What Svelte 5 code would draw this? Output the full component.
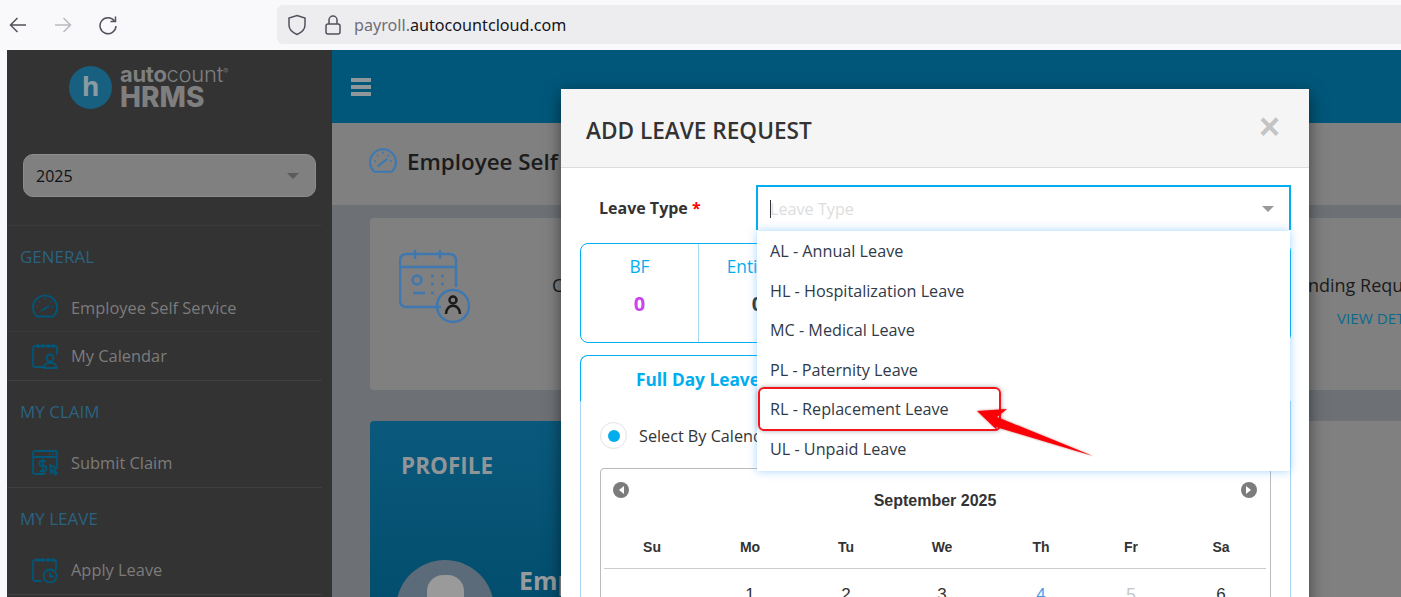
<script>
  const sections = [
    { title: "General", items: [{ label: "Employee Self Service", icon: "gauge" }, { label: "My Calendar", icon: "person" }] },
    { title: "My Claim", items: [{ label: "Submit Claim", icon: "claim" }] },
    { title: "My Leave", items: [{ label: "Apply Leave", icon: "clock" }] }
  ];
  const leaveTypes = ["AL - Annual Leave", "HL - Hospitalization Leave", "MC - Medical Leave", "PL - Paternity Leave", "RL - Replacement Leave", "UL - Unpaid Leave"];
  const weekdays = ["Su", "Mo", "Tu", "We", "Th", "Fr", "Sa"];
  const days = [
    { n: "" }, { n: "1" }, { n: "2" }, { n: "3" }, { n: "4", cls: "today" }, { n: "5", cls: "off" }, { n: "6" }
  ];
  const stats = [{ label: "BF", value: "0" }, { label: "Entitled", value: "0" }];
</script>

<div class="browser">
  <div class="nav-icons">
    <svg width="20" height="20" viewBox="0 0 20 20" fill="none" stroke="#52525e" stroke-width="1.5"><path d="M18 10H2.500M9.500 3l-7 7 7 7" /></svg>
    <svg class="fwd" width="20" height="20" viewBox="0 0 20 20" fill="none" stroke="#b9b9c0" stroke-width="1.5"><path d="M2 10h15.500M10.500 3l7 7-7 7" /></svg>
    <svg width="20" height="20" viewBox="0 0 20 20" fill="none" stroke="#52525e" stroke-width="1.5"><path d="M16.500 6A8 8 0 1 0 18 11" /><path d="M17.500 1.500V6.500H12.500" /></svg>
  </div>
  <div class="urlbar">
    <svg width="20" height="22" viewBox="0 0 20 22" fill="none" stroke="#52525e" stroke-width="1.5"><path d="M10 1.500l8 2.500v7c0 4.500-3.500 7.500-8 9.500-4.500-2-8-5-8-9.500V4z" /></svg>
    <svg class="lock" width="16" height="20" viewBox="0 0 16 20" fill="none" stroke="#52525e" stroke-width="1.5"><rect x="1" y="9" width="14" height="10" rx="2" /><path d="M4 9V5a4 4 0 0 1 8 0v4" /></svg>
    <span class="url"><span class="sub">payroll.</span>autocountcloud.com</span>
  </div>
</div>

<div class="shell">
  <aside class="sidebar">
    <div class="logo">
      <div class="logo-mark">h</div>
      <div class="logo-text">
        <div class="auto"><b>auto</b>count<sup>®</sup></div>
        <div class="hrms">HRMS</div>
      </div>
    </div>
    <div class="year">
      <span>2025</span>
      <i class="tri"></i>
    </div>
    {#each sections as s}
      <section class="side-section">
        <h4>{s.title}</h4>
        {#each s.items as item, i}
          <div class="side-item" class:ruled={i < s.items.length - 1}>
            <svg width="26" height="26" viewBox="0 0 26 26" fill="none" stroke="#00577a" stroke-width="1.8">
              {#if item.icon == "gauge"}
                <path d="M5 22.500A12 12 0 1 1 21 22.500z" />
                <path d="M9 17l8-5M13 4.500v1M5 13h1M20 13h1M7 7.500l.7.7M19 7.500l-.7.7" />
              {:else if item.icon == "person"}
                <path d="M11 24H3a2 2 0 0 1-2-2V5a2 2 0 0 1 2-2h20a2 2 0 0 1 2 2v7M6 1v4M11 1v4M16 1v4M21 1v4" />
                <circle cx="18" cy="15" r="3.500" /><path d="M12 25c0-7 12-7 13 0z" />
              {:else if item.icon == "claim"}
                <path d="M14 24H3a2 2 0 0 1-2-2V3a2 2 0 0 1 2-2h20a2 2 0 0 1 2 2v14M1 7h24M17 4h1M20 4h1M23 4h1" />
                <path d="M14 11h-4a2 2 0 0 0 0 5h2a2 2 0 0 1 0 5H8M11 9v14" />
                <path d="M18 15l7 3-3 1.500 3 4-2 1-3-4-1 2z" />
              {:else}
                <path d="M10 24H3a2 2 0 0 1-2-2V5a2 2 0 0 1 2-2h19a2 2 0 0 1 2 2v8M6 1v4M11 1v4M16 1v4M21 1v4" />
                <circle cx="18" cy="19" r="6.500" /><path d="M18 15.500V19.500h3.500" />
              {/if}
            </svg>
            <span>{item.label}</span>
          </div>
        {/each}
      </section>
    {/each}
  </aside>

  <main class="main">
    <header class="topbar">
      <div class="burger"><i></i><i></i><i></i></div>
    </header>
    <div class="page-title">
      <svg width="28" height="28" viewBox="0 0 26 26" fill="none" stroke="#3f78b0" stroke-width="2">
        <path d="M5 23A12 12 0 1 1 21 23z" />
        <path d="M8 18l9-7M13 4.500v1.500M5 13h1.500M19.500 13h1.500M7.500 7.500l1 1M18.500 7.500l-1 1" />
      </svg>
      <h1>Employee Self Service</h1>
    </div>
    <div class="content">
      <div class="summary card">
        <svg class="summary-icon" width="72" height="74" viewBox="0 0 72 74" fill="none" stroke="#3f78b0" stroke-width="2.500">
          <path d="M42 58H7a6 6 0 0 1-6-6V11a6 6 0 0 1 6-6h44a6 6 0 0 1 6 6v27M1 18h56M16 1v9M41 1v9" />
          <circle cx="18" cy="31" r="4.500" /><path d="M32 27h3M42 27h3M32 35h3M42 35h3M14 44h12M32 44h3" />
          <circle cx="54" cy="57" r="16" />
          <circle cx="54" cy="51" r="3.500" stroke="#1a1a1a" />
          <path d="M47 65c0-11 14-11 14 0" stroke="#1a1a1a" />
        </svg>
        <div class="sum-col first"><p>Current Leave</p></div>
        <div class="sum-col last">
          <p>Pending Requests</p>
          <a>VIEW DETAILS</a>
        </div>
      </div>
      <div class="lower">
        <div class="profile card">
          <h2>PROFILE</h2>
          <div class="profile-row">
            <div class="avatar"><i></i></div>
            <strong>Employee</strong>
          </div>
        </div>
        <div class="other card"></div>
      </div>
    </div>
  </main>

  <div class="modal">
    <div class="modal-head">
      <h3>ADD LEAVE REQUEST</h3>
      <span class="close">×</span>
    </div>
    <div class="modal-body">
      <div class="field">
        <label>Leave Type <em>*</em></label>
        <div class="select">
          <i class="caret"></i>
          <span class="placeholder">Leave Type</span>
          <i class="tri"></i>
          <ul class="options">
            {#each leaveTypes as t}
              <li>{t}</li>
            {/each}
          </ul>
        </div>
      </div>

      <div class="stats">
        {#each stats as st}
          <div class="stat">
            <span>{st.label}</span>
            <b class:dark={st.label != "BF"}>{st.value}</b>
          </div>
        {/each}
      </div>

      <div class="tabs">
        <div class="tab">Full Day Leave</div>
      </div>
      <div class="panel">
        <div class="radio-row">
          <span class="radio"><i></i></span>
          <span>Select By Calendar</span>
        </div>
        <div class="calendar">
          <div class="cal-head">
            <span class="cal-btn"><i class="left"></i></span>
            <span class="cal-title">September 2025</span>
            <span class="cal-btn"><i class="right"></i></span>
          </div>
          <div class="cal-grid head">
            {#each weekdays as d}
              <b>{d}</b>
            {/each}
          </div>
          <div class="cal-grid days">
            {#each days as d}
              <span class={d.cls}>{d.n}</span>
            {/each}
          </div>
        </div>
      </div>
    </div>
  </div>

  <!-- red annotation on top of the screenshot -->
  <div class="highlight"></div>
  <svg class="arrow" width="130" height="60" viewBox="0 0 130 60">
    <polygon points="7,12 37,10 27,18 123,57 26,28 28,32" fill="#fb0007" />
  </svg>
</div>

<style>
  :global(body) {
    margin: 0;
    background: #f9f9fb;
    font-family: "Open Sans", sans-serif;
    overflow: hidden;
  }

  .browser {
    height: 50px;
    display: flex;
    align-items: flex-start;
    box-sizing: border-box;
    padding-top: 5px;
  }

  .nav-icons {
    display: flex;
    gap: 25px;
    width: 277px;
    box-sizing: border-box;
    padding: 10px 0 0 8px;
  }

  .urlbar {
    flex: 1;
    height: 39px;
    background: #ededf0;
    border-radius: 6px 0 0 6px;
    display: flex;
    align-items: center;
    padding-left: 10px;
    color: #15141a;
    font-family: "Noto Sans", sans-serif;
    font-size: 16.15px;
  }

  .lock {
    margin-left: 18px;
  }

  .url {
    margin-left: 13px;
  }

  .sub {
    color: #6e6e77;
  }

  .shell {
    position: relative;
    height: 547px;
    overflow: hidden;
    display: flex;
    padding-left: 7px;
  }

  .sidebar {
    width: 325px;
    flex-shrink: 0;
    background: #333333;
    color: #7c7c7c;
    font-size: 16.4px;
  }

  .logo {
    display: flex;
    align-items: center;
    gap: 8px;
    padding: 16px 0 0 62px;
    height: 42px;
  }

  .logo-mark {
    width: 43px;
    height: 43px;
    border-radius: 50%;
    background: #17607f;
    color: #8b9aa3;
    font: 700 27px/40px "Open Sans", sans-serif;
    text-align: center;
  }

  .logo-text {
    font-family: "Inter", sans-serif;
    color: #7f7f7f;
  }

  .auto {
    font-size: 22px;
    line-height: 20px;
    letter-spacing: -0.3px;
    font-weight: 300;
  }

  .auto b {
    font-weight: 700;
  }

  .auto sup {
    font-size: 8px;
    line-height: 0;
  }

  .hrms {
    font-size: 28px;
    font-weight: 800;
    line-height: 26px;
  }

  .year {
    margin: 46px 16px 0;
    height: 43px;
    box-sizing: border-box;
    background: #808080;
    border: 1px solid #8d8d8d;
    border-radius: 10px;
    display: flex;
    align-items: center;
    justify-content: space-between;
    padding: 0 16px 0 12px;
    color: #111;
    font-size: 16px;
  }

  .tri {
    width: 0;
    height: 0;
    border-left: 6px solid transparent;
    border-right: 6px solid transparent;
    border-top: 6px solid #5b5b5b;
  }

  .year + .side-section {
    margin-top: 28px;
    border-top: 1px solid #3a3a3a;
  }

  .side-section {
    margin-right: 10px;
    border-bottom: 1px solid #3f3f3f;
  }

  .side-section h4 {
    margin: 0;
    height: 58px;
    box-sizing: border-box;
    padding: 19px 0 0 13px;
    font-size: 17px;
    font-weight: 400;
    line-height: 24px;
    text-transform: uppercase;
    color: #2a627f;
  }

  .side-item {
    height: 48px;
    box-sizing: border-box;
    display: flex;
    align-items: center;
    padding: 0 0 1px 25px;
    gap: 13px;
  }

  .side-item.ruled {
    border-bottom: 1px solid #383838;
  }

  .main {
    flex: 1;
    min-width: 0;
    background: #808080;
    display: flex;
    flex-direction: column;
  }

  .topbar {
    height: 73px;
    flex-shrink: 0;
    background: #00577a;
    display: flex;
    align-items: center;
    padding-left: 19px;
  }

  .burger {
    display: flex;
    flex-direction: column;
    gap: 3px;
    width: 20px;
  }

  .burger i {
    height: 4px;
    background: #8f979b;
  }

  .page-title {
    height: 82px;
    flex-shrink: 0;
    box-sizing: border-box;
    padding: 0 0 6px 37px;
    display: flex;
    align-items: center;
    gap: 10px;
  }

  .page-title h1 {
    margin: 0;
    font-size: 22.4px;
    font-weight: 600;
    color: #1b1b1b;
    white-space: nowrap;
  }

  .content {
    flex: 1;
    background: #6d7175;
    padding: 13px 0 0 38px;
    display: flex;
    flex-direction: column;
    gap: 31px;
    min-width: 0;
  }

  .card {
    background: #808080;
    border-radius: 4px 0 0 4px;
  }

  .summary {
    height: 172px;
    flex-shrink: 0;
    position: relative;
    display: flex;
    padding: 31px 0 0 29px;
    box-sizing: border-box;
    color: #1b1b1b;
  }

  .sum-col p {
    margin: 0;
    font-size: 18px;
    line-height: 24px;
    font-weight: 500;
    white-space: nowrap;
  }

  .sum-col.first {
    margin: 24px 0 0 81px;
  }

  .sum-col.last {
    margin: 24px 0 0 auto;
    width: 114px;
    flex-shrink: 0;
    overflow: hidden;
  }

  .sum-col.last a {
    display: block;
    margin: 11px 0 0 50px;
    color: #0a6a8d;
    font-size: 15.2px;
    white-space: nowrap;
  }

  .lower {
    flex: 1;
    display: flex;
    gap: 31px;
  }

  .profile {
    width: 420px;
    background: linear-gradient(#0a597c, #004a69);
    padding: 30px 0 0 31px;
    box-sizing: border-box;
  }

  .profile h2 {
    margin: 0;
    font-size: 22.5px;
    line-height: 30px;
    font-weight: 700;
    color: #8f9598;
  }

  .profile-row {
    display: flex;
    gap: 25px;
    margin: 79px 0 0 -5px;
  }

  .avatar {
    width: 98px;
    height: 98px;
    border-radius: 50%;
    background: #5c6b79;
    flex-shrink: 0;
    display: flex;
    justify-content: center;
    padding-top: 15px;
    box-sizing: border-box;
  }

  .avatar i {
    width: 37px;
    height: 40px;
    border-radius: 16px 16px 12px 12px;
    background: #9a9a9a;
  }

  .profile-row strong {
    font-size: 25px;
    line-height: 40px;
    color: #979b9e;
  }

  .other {
    flex: 1;
    border-radius: 4px 0 0 0;
  }

  .modal {
    position: absolute;
    left: 561px;
    top: 39px;
    width: 748px;
    height: 640px;
    background: #fff;
    box-shadow: 0 5px 15px rgba(0, 0, 0, 0.5);
    color: #333;
  }

  .modal-head {
    height: 79px;
    box-sizing: border-box;
    background: #f5f5f5;
    border-bottom: 1px solid #dcdcdc;
    display: flex;
    align-items: center;
    justify-content: space-between;
    padding: 4px 29px 0 25px;
  }

  .modal-head h3 {
    margin: 0;
    font-size: 22.6px;
    font-weight: 600;
    color: #333;
  }

  .close {
    font: 700 36px/36px "Liberation Sans", sans-serif;
    color: #c4c4c4;
    margin-top: -7px;
  }

  .modal-body {
    padding: 17px 18px 0 19px;
  }

  .field {
    display: flex;
    align-items: center;
  }

  .field label {
    width: 176px;
    box-sizing: border-box;
    padding-left: 19px;
    font-size: 16px;
    font-weight: 700;
  }

  .field em {
    color: #f00;
    font-style: normal;
  }

  .select {
    position: relative;
    flex: 1;
    height: 45px;
    box-sizing: border-box;
    border: 2px solid #00aeef;
    border-bottom: 0;
    display: flex;
    align-items: center;
    padding: 0 15px 0 12px;
  }

  .caret {
    width: 1px;
    height: 18px;
    background: #333;
  }

  .placeholder {
    flex: 1;
    font-size: 16.2px;
    color: #ddd;
    margin-left: -1px;
  }

  .select .tri {
    border-top-color: #9a9a9a;
  }

  .options {
    position: absolute;
    left: -1px;
    top: 44px;
    width: 533px;
    margin: 0;
    padding: 1px 0 2px;
    list-style: none;
    background: #fff;
    box-shadow: 0 0 9px rgba(60, 160, 250, 0.45);
    z-index: 2;
  }

  .options li {
    height: 39.5px;
    line-height: 39.5px;
    padding-left: 13px;
    font-size: 16.2px;
    color: #2f3a4a;
  }

  .stats {
    margin-top: 13px;
    height: 100px;
    box-sizing: border-box;
    border: 1px solid #00aeef;
    border-radius: 8px;
    display: flex;
  }

  .stat {
    width: 117px;
    border-right: 1px solid #a9d8f3;
    display: flex;
    flex-direction: column;
    align-items: center;
    padding-top: 11px;
    gap: 12px;
    color: #00aeef;
    font-size: 17.3px;
  }

  .stat b {
    font-size: 20px;
    color: #c944ec;
  }

  .stat b.dark {
    color: #333;
  }

  .tabs {
    margin-top: 12px;
    display: flex;
  }

  .tab {
    width: 210px;
    height: 46px;
    box-sizing: border-box;
    border: 1px solid #00aeef;
    border-bottom: 0;
    border-radius: 8px 8px 0 0;
    padding: 12px 0 0 55px;
    font-size: 17.3px;
    font-weight: 700;
    color: #00aeef;
    white-space: nowrap;
  }

  .panel {
    border: 1px solid #a9d3f1;
    border-top: 0;
    padding: 21px 19px 0 19px;
  }

  .radio-row {
    display: flex;
    align-items: center;
    gap: 12px;
    font-size: 16.2px;
    color: #333;
  }

  .radio {
    width: 27px;
    height: 27px;
    box-sizing: border-box;
    border: 1px solid #e2e2e2;
    border-radius: 50%;
    display: flex;
    align-items: center;
    justify-content: center;
  }

  .radio i {
    width: 12px;
    height: 12px;
    border-radius: 50%;
    background: #00aeef;
  }

  .calendar {
    margin-top: 19px;
    border: 1px solid #bbb;
    border-radius: 4px 4px 0 0;
    padding: 13px 4px 0 3px;
    font-family: "Liberation Sans", sans-serif;
    color: #333;
  }

  .cal-head {
    display: flex;
    justify-content: space-between;
    padding: 0 9px;
    height: 46px;
  }

  .cal-btn {
    width: 16px;
    height: 16px;
    border-radius: 50%;
    background: #7c7c7c;
    display: flex;
    align-items: center;
    justify-content: center;
  }

  .cal-btn i {
    width: 0;
    height: 0;
    border-top: 4px solid transparent;
    border-bottom: 4px solid transparent;
  }

  .cal-btn .left {
    border-right: 5px solid #fff;
  }

  .cal-btn .right {
    border-left: 5px solid #fff;
  }

  .cal-title {
    margin-top: 10px;
    font-size: 16px;
    font-weight: 700;
  }

  .cal-grid {
    display: grid;
    grid-template-columns: 96px 100px 92px 100px 98px 82px 98px;
    text-align: center;
  }

  .cal-grid.head {
    height: 41px;
    line-height: 27px;
    font-size: 14px;
    padding-top: 6px;
    box-sizing: border-box;
    border-bottom: 1px solid #ccc;
  }

  .cal-grid.days {
    font-size: 17px;
    padding-top: 16px;
  }

  .days .today {
    color: #4a9ce8;
  }

  .days .off {
    color: #c4c4c4;
  }

  .highlight {
    position: absolute;
    left: 758px;
    top: 337px;
    width: 243px;
    height: 44px;
    box-sizing: border-box;
    border: 2px solid #f4141c;
    border-radius: 6px;
    box-shadow: 0 0 5px rgba(0, 0, 0, 0.35);
    z-index: 3;
  }

  .arrow {
    position: absolute;
    left: 970px;
    top: 349px;
    z-index: 4;
    filter: drop-shadow(0 0 1px rgba(150, 0, 0, 0.5));
  }
</style>
